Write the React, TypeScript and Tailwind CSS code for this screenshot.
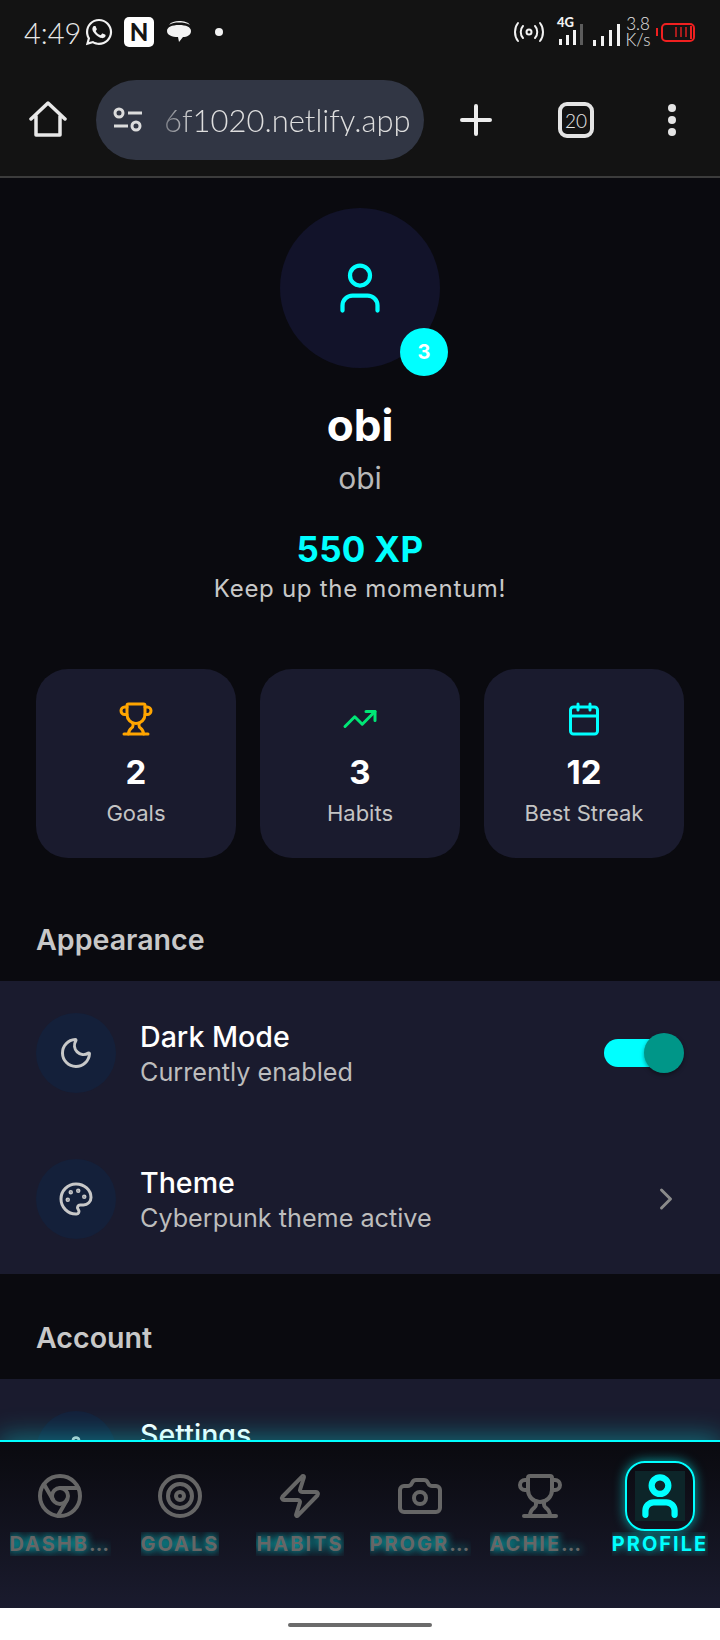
import { Calendar, Camera, ChevronRight, Chrome, Moon, Palette, Settings, Target, TrendingUp, Trophy, User, Zap } from "lucide-react"
import { FaWhatsapp } from "react-icons/fa"
import type { ReactNode } from "react"

const NAV_ITEMS = [
  { label: "Dashboard", icon: Chrome },
  { label: "Goals", icon: Target },
  { label: "Habits", icon: Zap },
  { label: "Progress", icon: Camera },
  { label: "Achievements", icon: Trophy },
  { label: "Profile", icon: User, active: true },
]

function StatusBar() {
  return (
    <div className="flex h-[64px] items-center pl-6 pr-[25px] font-['Lato',sans-serif]">
      <span className="w-[58px] text-[29px] font-light leading-none text-[#e8e8e8]">4:49</span>
      <FaWhatsapp size={30} className="ml-[2px] text-[#f2f2f2]" />
      {/* notification icons */}
      <span className="ml-[10px] flex h-[30px] w-[30px] items-center justify-center rounded-[5px] bg-white text-[24px] font-black leading-none text-[#151515]">
        N
      </span>
      <svg width="26" height="24" viewBox="0 0 26 24" className="ml-[12px]" fill="#f2f2f2">
        <path d="M3 5C5 2 9 1 13 1c5 0 9 1 11 4-3-2-7-2.500-11-2.500S6 3 3 5z" />
        <path d="M1 11c0-4 5-6 12-6s12 2 12 6c0 4-4 6-8 6l-4 5-1-5C6 17 1 15 1 11z" />
      </svg>
      <span className="ml-[23px] h-2 w-2 rounded-full bg-[#f2f2f2]" />
      <div className="flex-1" />
      {/* hotspot */}
      <svg width="30" height="22" viewBox="0 0 30 22" fill="none" stroke="#f2f2f2" strokeWidth="2" strokeLinecap="round">
        <circle cx="15" cy="11" r="2.500" />
        <path d="M9 5c-3 3-3 9 0 12M21 5c3 3 3 9 0 12M4 2c-4 5-4 13 0 18M26 2c4 5 4 13 0 18" />
      </svg>
      <div className="relative ml-[13px] h-[28px] w-[28px]">
        <span className="absolute -top-[2px] left-0 text-[13px] font-black leading-none text-[#f2f2f2]">4G</span>
        <svg width="28" height="28" viewBox="0 0 28 28" fill="#f2f2f2">
          <rect x="2" y="21" width="3" height="6" />
          <rect x="9" y="17" width="3" height="10" />
          <rect x="16" y="12" width="3" height="15" />
          <rect x="23" y="6" width="3" height="21" fill="#5c5c5c" />
        </svg>
      </div>
      <svg width="28" height="22" viewBox="0 0 28 22" fill="#f2f2f2" className="ml-[7px] mt-[5px]">
        <rect x="1" y="16" width="3" height="6" />
        <rect x="9" y="12" width="3" height="10" />
        <rect x="17" y="6" width="3" height="16" />
        <rect x="25" y="0" width="3" height="22" />
      </svg>
      <div className="ml-[5px] flex w-[26px] flex-col items-center text-[17px] font-light leading-[16px] text-[#e4e4e4]">
        <span>3.8</span>
        <span>K/s</span>
      </div>
      <div className="ml-[5px] flex items-center">
        <span className="h-[8px] w-[2px] bg-[#f02020]" />
        <div className="ml-[3px] flex h-[19px] w-[34px] items-center justify-end gap-[3px] rounded-[5px] border-2 border-[#f02020] pr-[1px]">
          <span className="h-[10px] w-[2px] bg-[#a81c1c]" />
          <span className="h-[10px] w-[2px] bg-[#a81c1c]" />
          <span className="h-[10px] w-[2px] bg-[#a81c1c]" />
          <span className="h-[13px] w-[2px] bg-[#f02020]" />
        </div>
      </div>
    </div>
  )
}

function Toolbar() {
  return (
    <div className="flex h-[114px] items-start border-b-2 border-[#3c3c3c] pt-4 font-['Lato',sans-serif]">
      <div className="flex h-[80px] w-[96px] items-center justify-center">
        <svg width="38" height="38" viewBox="0 0 38 38" fill="none" stroke="#e8e8e8" strokeWidth="3.500" strokeLinejoin="round" strokeLinecap="round">
          <path d="M2 18L19 2l17 16M7 15v19h24V15" />
        </svg>
      </div>
      <div className="flex h-[80px] w-[328px] items-center rounded-[40px] bg-[#313644] pl-[17px]">
        <svg width="30" height="26" viewBox="0 0 30 26" fill="none" stroke="#dcdcdc" strokeWidth="3" className="shrink-0">
          <circle cx="6" cy="6" r="4" />
          <path d="M15 6h14M1 19h14" />
          <circle cx="23" cy="19" r="4" />
        </svg>
        <span className="ml-[21px] overflow-hidden whitespace-nowrap text-[31px] font-light leading-none text-[#dedede] [mask-image:linear-gradient(to_right,rgba(0,0,0,0.4),black_32px)]">
          6f1020.netlify.app
        </span>
      </div>
      <div className="flex h-[80px] w-[104px] items-center justify-center">
        <svg width="32" height="32" viewBox="0 0 32 32" stroke="#ececec" strokeWidth="4" strokeLinecap="round">
          <path d="M16 2v28M2 16h28" />
        </svg>
      </div>
      <div className="flex h-[80px] w-[96px] items-center justify-center">
        <span className="flex h-[36px] w-[36px] items-center justify-center rounded-[9px] border-4 border-[#e4e4e4] text-[19px] font-light leading-none text-[#e8e8e8]">
          20
        </span>
      </div>
      <div className="flex h-[80px] flex-1 flex-col items-center justify-center gap-1">
        <span className="h-2 w-2 rounded-full bg-[#e4e4e4]" />
        <span className="h-2 w-2 rounded-full bg-[#e4e4e4]" />
        <span className="h-2 w-2 rounded-full bg-[#e4e4e4]" />
      </div>
    </div>
  )
}

function StatCard({ icon, value, label }: { icon: ReactNode; value: string; label: string }) {
  return (
    <div className="flex h-[189px] flex-col items-center rounded-[32px] bg-[#1a1b2e] pt-[32px]">
      {icon}
      <div className="mt-[15px] text-[33px] font-bold leading-[40px] text-white">{value}</div>
      <div className="mt-[8px] text-[22px] leading-[26px] text-[#c4c4c4]">{label}</div>
    </div>
  )
}

function SettingRow({ icon, title, subtitle, trailing }: { icon: ReactNode; title: string; subtitle: string; trailing?: ReactNode }) {
  return (
    <div className="mb-[2px] flex items-center px-9 py-8">
      <div className="flex h-20 w-20 shrink-0 items-center justify-center rounded-full bg-[#14203a] text-[#c8c8c8]">{icon}</div>
      <div className="ml-6 flex-1 pt-[2px]">
        <div className="text-[28.600px] font-medium leading-[37px] text-white">{title}</div>
        <div className="text-[25.200px] leading-[35px] text-[#bdbdbd]">{subtitle}</div>
      </div>
      {trailing}
    </div>
  )
}

function BottomNav() {
  return (
    <div className="relative grid h-[168px] grid-cols-6 border-t-2 border-[#00ffff] bg-gradient-to-b from-[#0a0a0f] to-[#1a1b2e] pt-[19px] shadow-[0_-4px_24px_rgba(0,255,255,0.35)]">
      {NAV_ITEMS.map(({ label, icon: Icon, active }) => (
        <div key={label} className="flex min-w-0 flex-col items-center">
          <div
            className={
              "flex h-[70px] w-[70px] items-center justify-center rounded-[20px] " +
              (active ? "border-2 border-[#00ffff] text-[#00ffff] shadow-[0_0_12px_rgba(0,255,255,0.6)]" : "text-[#666666]")
            }
          >
            {active ? (
              <div className="flex h-[50px] w-[50px] items-center justify-center bg-[#0d2529]">
                <Icon size={50} strokeWidth={3} />
              </div>
            ) : (
              <Icon size={48} strokeWidth={2} />
            )}
          </div>
          <div
            className={
              "mt-[1px] max-w-[101px] truncate text-[20px] font-bold uppercase leading-[24px] tracking-[2px] " +
              (active
                ? "text-[#00ffff] [text-shadow:0_0_8px_rgba(0,255,255,0.8)]"
                : "text-[#666666] [text-shadow:0_0_10px_#00ffff]")
            }
          >
            {label}
          </div>
        </div>
      ))}
    </div>
  )
}

export default function App() {
  return (
    <div className="flex h-[1640px] w-[720px] flex-col overflow-hidden bg-[#0a0a0f] font-['Inter',sans-serif]">
      <div className="shrink-0 bg-[#131313]">
        <StatusBar />
        <Toolbar />
      </div>

      <div className="min-h-0 flex-1 overflow-hidden">
        {/* Profile header */}
        <div className="flex flex-col items-center pt-[30px]">
          <div className="relative flex h-40 w-40 items-center justify-center rounded-full bg-[#12132a] text-[#00ffff]">
            <User size={60} strokeWidth={1.700} />
            <span className="absolute -bottom-2 -right-2 flex h-12 w-12 items-center justify-center rounded-full bg-[#00ffff] text-[20px] font-bold text-white">
              3
            </span>
          </div>
          <div className="mt-[32px] text-[44px] font-bold leading-[50px] text-white">obi</div>
          <div className="mt-[10px] text-[30px] leading-[36px] text-[#b8b8b8]">obi</div>
          <div className="mt-[31px] text-[35px] font-bold leading-[44px] tracking-[0.3px] text-[#00ffff]">550 XP</div>
          <div className="mt-[2px] text-[24px] leading-[32px] tracking-[0.7px] text-[#c8c8c8]">Keep up the momentum!</div>
        </div>

        {/* Stats */}
        <div className="mt-[64px] grid grid-cols-3 gap-6 px-9">
          <StatCard icon={<Trophy size={36} className="text-[#ffa500]" />} value="2" label="Goals" />
          <StatCard icon={<TrendingUp size={36} className="text-[#00e676]" />} value="3" label="Habits" />
          <StatCard icon={<Calendar size={36} className="text-[#00ffff]" />} value="12" label="Best Streak" />
        </div>

        {/* Appearance */}
        <div className="mt-[64px] px-9 text-[28.600px] font-semibold leading-[36px] text-[#c8c8c8]">Appearance</div>
        <div className="mt-[23px] bg-[#1a1b2e] pb-[1px]">
          <SettingRow
            icon={<Moon size={36} />}
            title="Dark Mode"
            subtitle="Currently enabled"
            trailing={
              <div className="relative mr-2 h-7 w-[72px] rounded-full bg-[#00ffff]">
                <span className="absolute -top-[6px] right-[-8px] h-10 w-10 rounded-full bg-[#009688] shadow-[0_2px_4px_rgba(0,0,0,0.4)]" />
              </div>
            }
          />
          <SettingRow
            icon={<Palette size={36} />}
            title="Theme"
            subtitle="Cyberpunk theme active"
            trailing={<ChevronRight size={36} className="text-[#8a8a8a]" />}
          />
        </div>

        {/* Account */}
        <div className="mt-[46px] px-9 text-[28.600px] font-semibold leading-[36px] text-[#c8c8c8]">Account</div>
        <div className="mt-[23px] bg-[#1a1b2e]">
          <SettingRow icon={<Settings size={32} />} title="Settings" subtitle="Preferences and privacy" />
        </div>
      </div>

      <BottomNav />

      <div className="relative flex h-8 shrink-0 items-center justify-center bg-white pt-[1px]">
        <span className="h-1 w-[144px] rounded-full bg-[#6b6b6b]" />
      </div>
    </div>
  )
}
